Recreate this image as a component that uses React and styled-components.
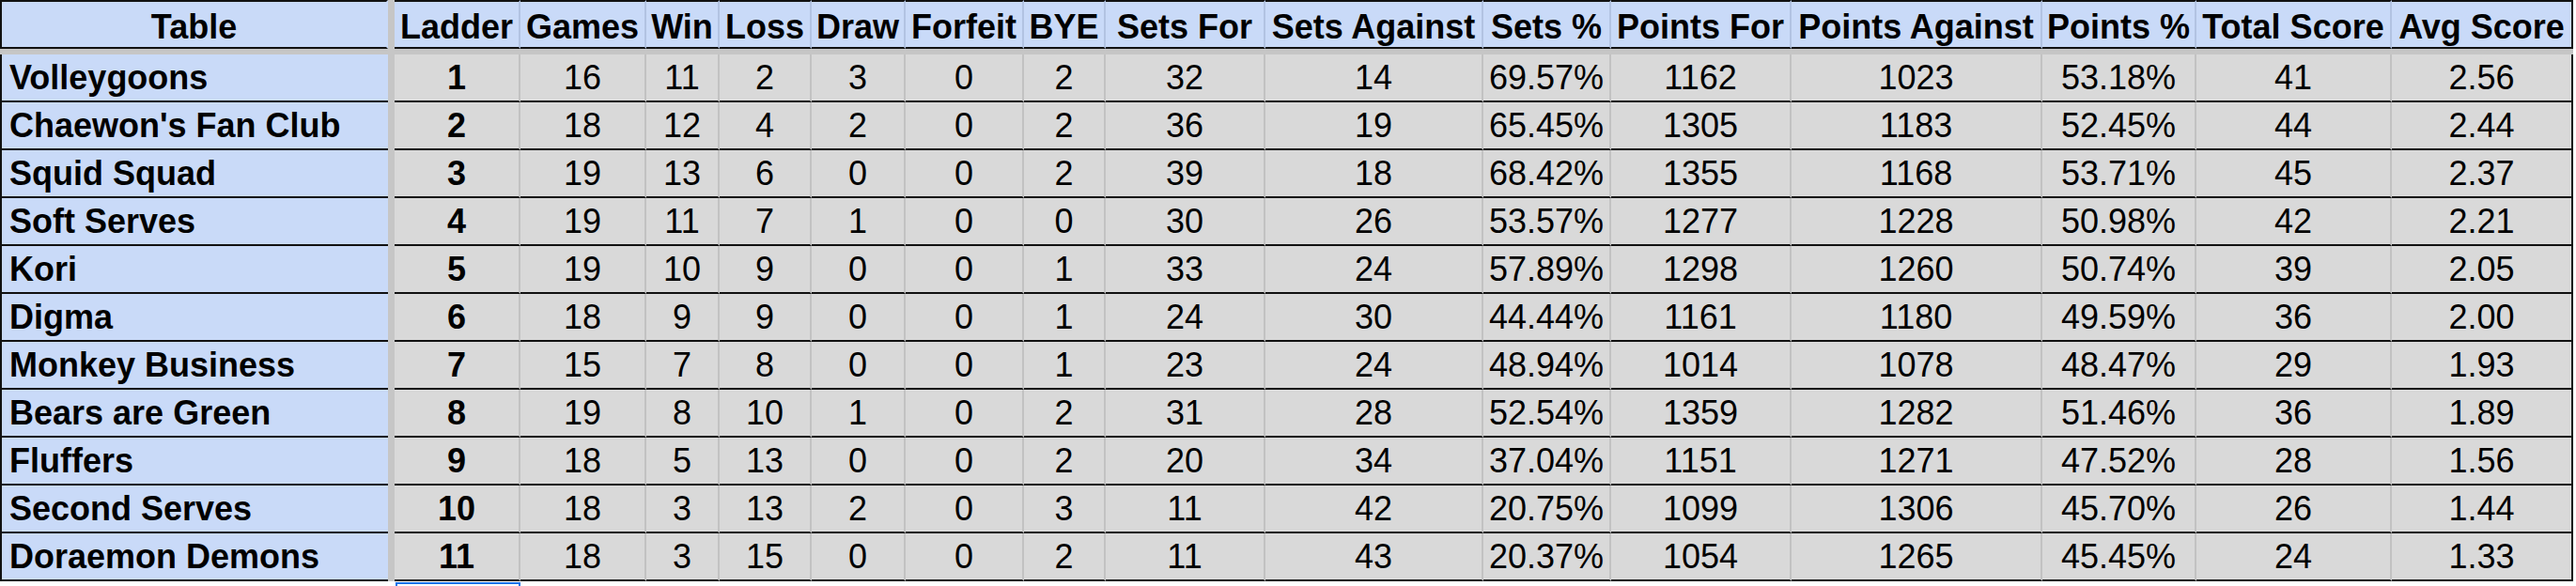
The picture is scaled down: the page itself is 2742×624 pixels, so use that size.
import React from 'react';
import styled, { createGlobalStyle } from 'styled-components';

const GlobalStyle = createGlobalStyle`
  html, body {
    margin: 0;
    padding: 0;
    background: #ffffff;
  }
  * {
    box-sizing: border-box;
  }
`;

// column tracks, borders included (table col, frozen separator, stat cols)
const COLUMNS = '413px 7px 134px 134px 78px 98px 100px 126px 87px 170px 232px 136px 192px 267px 164px 208px 193px';

const Sheet = styled.div`
  width: 2739px;
  font-family: "Liberation Sans", Arial, sans-serif;
  font-size: 36px;
  color: #000;
`;

const Row = styled.div`
  display: grid;
  grid-template-columns: ${COLUMNS};
  height: ${props => props.$height}px;
`;

const FreezeLine = styled.div`
  height: 6px;
  background: #c6c6c6;
`;

const Separator = styled.div`
  background: #c6c6c6;
`;

const HeaderCell = styled.div`
  background: #c9daf8;
  border-top: 2px solid #111;
  border-bottom: 2px solid #111;
  border-left: ${props => (props.$first ? '2px solid #111' : 'none')};
  border-right: 2px solid ${props => (props.$last ? '#111' : props.$first ? 'transparent' : '#b2c3e2')};
  display: flex;
  align-items: flex-end;
  justify-content: center;
  font-weight: 700;
  white-space: nowrap;
  line-height: normal;
`;

const TeamCell = styled.div`
  background: #c9daf8;
  border-left: 2px solid #111;
  border-bottom: 2px solid #111;
  display: flex;
  align-items: center;
  padding-left: 8px;
  font-weight: 700;
  white-space: nowrap;
`;

const StatCell = styled.div`
  background: #d9d9d9;
  border-bottom: 2px solid #111;
  border-right: 2px solid ${props => (props.$last ? '#111' : '#c2c2c2')};
  display: flex;
  align-items: center;
  justify-content: center;
  font-weight: ${props => (props.$bold ? 700 : 400)};
  white-space: nowrap;
`;

const Blank = styled.div`
  background: #ffffff;
`;

const Selection = styled.div`
  margin-left: 1px;
  margin-top: 1px;
  border: 2px solid #1a73e8;
  border-bottom: none;
`;

const headers = [
  'Ladder', 'Games', 'Win', 'Loss', 'Draw', 'Forfeit', 'BYE', 'Sets For',
  'Sets Against', 'Sets %', 'Points For', 'Points Against', 'Points %',
  'Total Score', 'Avg Score',
];

const teams = [
  ['Volleygoons', '1', '16', '11', '2', '3', '0', '2', '32', '14', '69.57%', '1162', '1023', '53.18%', '41', '2.56'],
  ["Chaewon's Fan Club", '2', '18', '12', '4', '2', '0', '2', '36', '19', '65.45%', '1305', '1183', '52.45%', '44', '2.44'],
  ['Squid Squad', '3', '19', '13', '6', '0', '0', '2', '39', '18', '68.42%', '1355', '1168', '53.71%', '45', '2.37'],
  ['Soft Serves', '4', '19', '11', '7', '1', '0', '0', '30', '26', '53.57%', '1277', '1228', '50.98%', '42', '2.21'],
  ['Kori', '5', '19', '10', '9', '0', '0', '1', '33', '24', '57.89%', '1298', '1260', '50.74%', '39', '2.05'],
  ['Digma', '6', '18', '9', '9', '0', '0', '1', '24', '30', '44.44%', '1161', '1180', '49.59%', '36', '2.00'],
  ['Monkey Business', '7', '15', '7', '8', '0', '0', '1', '23', '24', '48.94%', '1014', '1078', '48.47%', '29', '1.93'],
  ['Bears are Green', '8', '19', '8', '10', '1', '0', '2', '31', '28', '52.54%', '1359', '1282', '51.46%', '36', '1.89'],
  ['Fluffers', '9', '18', '5', '13', '0', '0', '2', '20', '34', '37.04%', '1151', '1271', '47.52%', '28', '1.56'],
  ['Second Serves', '10', '18', '3', '13', '2', '0', '3', '11', '42', '20.75%', '1099', '1306', '45.70%', '26', '1.44'],
  ['Doraemon Demons', '11', '18', '3', '15', '0', '0', '2', '11', '43', '20.37%', '1054', '1265', '45.45%', '24', '1.33'],
];

function App() {
  return (
    <>
      <GlobalStyle />
      <Sheet>
        <Row $height={52}>
          <HeaderCell $first>Table</HeaderCell>
          <Separator />
          {headers.map((h, i) => (
            <HeaderCell key={h} $last={i === headers.length - 1}>{h}</HeaderCell>
          ))}
        </Row>
        <FreezeLine />
        {teams.map(([name, ...stats]) => (
          <Row key={name} $height={51}>
            <TeamCell>{name}</TeamCell>
            <Separator />
            {stats.map((value, i) => (
              <StatCell key={i} $bold={i === 0} $last={i === stats.length - 1}>
                {value}
              </StatCell>
            ))}
          </Row>
        ))}
        <Row $height={5}>
          <Blank />
          <Blank />
          <Selection />
        </Row>
      </Sheet>
    </>
  );
}

export default App;
